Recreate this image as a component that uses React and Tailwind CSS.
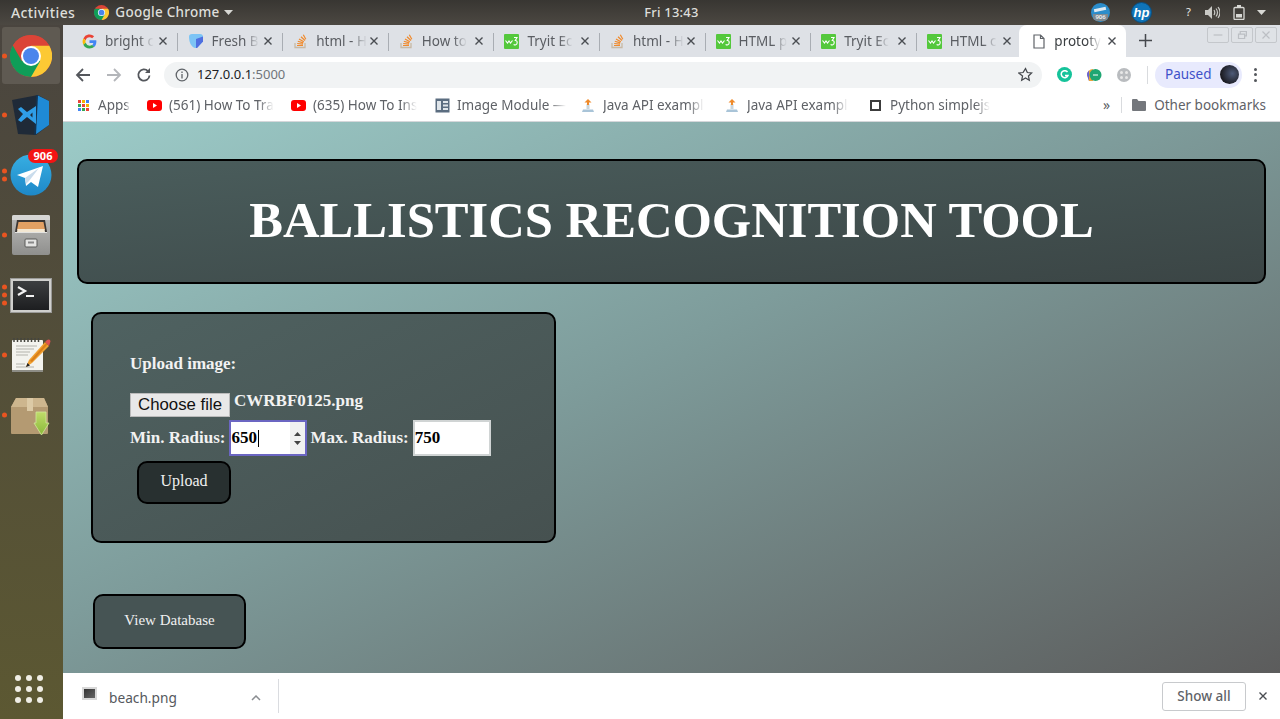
import React from "react";

const ui = { fontFamily: '"Noto Sans", "Open Sans", sans-serif' };
const serif = { fontFamily: '"Liberation Serif", serif' };

function GIcon() {
  return (
    <svg width="15" height="15" viewBox="0 0 24 24" className="shrink-0">
      <path fill="#EA4335" d="M12 5c1.6 0 3.1.6 4.2 1.6l3.2-3.2A11 11 0 0 0 2.2 7l3.7 2.9A6.6 6.6 0 0 1 12 5z" />
      <path fill="#4285F4" d="M23 12.3c0-.8-.1-1.6-.2-2.3H12v4.5h6.2a5.3 5.3 0 0 1-2.3 3.5l3.6 2.8c2.2-2 3.5-5 3.5-8.5z" />
      <path fill="#FBBC05" d="M5.9 14.1a6.6 6.6 0 0 1 0-4.2L2.2 7a11 11 0 0 0 0 10z" />
      <path fill="#34A853" d="M12 23c3 0 5.500-1 7.500-2.700L15.900 17.500c-1 .7-2.300 1.100-3.900 1.100a6.600 6.600 0 0 1-6.100-4.500L2.200 17A11 11 0 0 0 12 23z" />
    </svg>
  );
}
function FreshIcon() {
  return (
    <svg width="16" height="16" viewBox="0 0 16 16" className="shrink-0">
      <path d="M1 3.500Q1 1 4 1h8q3 0 3 3v4.500L9 15H7C3 14 1 9 1 3.500z" fill="#7cc4f5" />
      <path d="M8 6l7-2.500v5L9 15H8z" fill="#4f6fe0" />
    </svg>
  );
}
function SOIcon() {
  return (
    <svg width="15" height="16" viewBox="0 0 15 16" className="shrink-0" fill="none">
      <path d="M2 10v4.500h10V10" stroke="#c8b9a4" strokeWidth="1.300" />
      <path d="M4 12.500h6M4.200 10.500l5.800.7M4.800 8.200l5.500 1.700M6 6l4.800 2.800M8 3.800l4 3.700M10.300 1.800l2.500 4.500" stroke="#f08a2c" strokeWidth="1.200" />
    </svg>
  );
}
function W3Icon() {
  return (
    <svg width="15" height="15" viewBox="0 0 15 15" className="shrink-0">
      <rect width="15" height="15" rx="1" fill="#54c83c" />
      <path d="M1.500 6.500 3.500 9 5 7l1.500 2 2-2.500" stroke="#fff" strokeWidth="1.100" fill="none" />
      <path d="M10 3.500h3L11.300 6.500c1.500 0 1.900 1 1.900 2 0 2.500-2.500 3-3.500 1.800" stroke="#fff" strokeWidth="1.100" fill="none" />
    </svg>
  );
}
function DocIcon() {
  return (
    <svg width="12" height="15" viewBox="0 0 12 15" className="shrink-0" fill="none">
      <path d="M1 1h6.500L11 4.500V14H1z M7.500 1v3.500H11" stroke="#5f6368" strokeWidth="1.200" />
    </svg>
  );
}
function X({ className = "" }) {
  return (
    <svg width="10" height="10" viewBox="0 0 10 10" className={"shrink-0 " + className}>
      <path d="M1.500 1.500l7 7m0-7l-7 7" stroke="#4a4d52" strokeWidth="1.400" />
    </svg>
  );
}

const fadeEnd = { WebkitMaskImage: "linear-gradient(to right,#000 70%,transparent)" };
const fadeBm = { WebkitMaskImage: "linear-gradient(to right,#000 85%,transparent)" };

function Tab({ icon, title, sep = true, active = false }) {
  return (
    <div className={active ? "relative ml-[-2px] flex h-[32px] w-[107px] items-center rounded-t-lg bg-white pl-[14px] pr-[9px]" : "relative flex h-[32px] w-[105.600px] items-center pl-[11px] pr-[9px]"}>
      {icon}
      <span className={active ? "ml-[9px] whitespace-nowrap text-[13.500px] text-[#3c4043]" : "ml-[8px] whitespace-nowrap text-[13.500px] text-[#5a5d62]"} style={fadeEnd}>{title}</span>
      <X className="ml-auto" />
      {sep && <span className="absolute right-[-1px] top-[8px] h-[18px] w-px bg-[#a9adb3]" />}
    </div>
  );
}

function Bookmark({ icon, label, width }) {
  return (
    <div className="flex items-center" style={{ width }}>
      <span className="flex w-[16px] shrink-0 justify-center">{icon}</span>
      <span className="ml-[7px] whitespace-nowrap text-[13.500px] text-[#5f6267]" style={fadeBm}>{label}</span>
    </div>
  );
}

function YT() {
  return (
    <svg width="15" height="11" viewBox="0 0 15 11"><rect width="15" height="11" rx="3" fill="#f00" /><path d="M6 3l4 2.500L6 8z" fill="#fff" /></svg>
  );
}
function JavaIcon() {
  return (
    <svg width="14" height="16" viewBox="0 0 14 16">
      <path d="M2 12.500h10l1 2.500H1z" fill="#a9c4d8" />
      <path d="M5.500 12V7h3v5z" fill="#c9d5dc" />
      <path d="M7 2l3.500 3.500h-7z" fill="#ef8a2a" />
      <path d="M6 5h2v3H6z" fill="#ef8a2a" />
    </svg>
  );
}

function DockChrome() {
  return (
    <svg width="42" height="42" viewBox="0 0 42 42">
      <circle cx="21" cy="21" r="21" fill="#db4437" />
      <path d="M21 42a21 21 0 0 0 18.200-31.500H21z" fill="#fcc934" />
      <path d="M2.800 10.500A21 21 0 0 0 21 42l9.100-15.750L21 10.500z" fill="#0f9d58" />
      <path d="M21 0a21 21 0 0 0-18.200 10.500l9.100 15.750L21 10.500h18.200A21 21 0 0 0 21 0z" fill="#db4437" />
      <circle cx="21" cy="21" r="10" fill="#fff" />
      <circle cx="21" cy="21" r="8" fill="#4a85ec" />
    </svg>
  );
}

function Pip({ n = 1 }) {
  return (
    <div className="absolute left-0 top-1/2 flex -translate-y-1/2 flex-col gap-[3px]">
      {Array.from({ length: n }).map((_, i) => (
        <span key={i} className="h-[5px] w-[5px] rounded-full bg-[#e95420]" />
      ))}
    </div>
  );
}

function DockItem({ n, active, children }) {
  return (
    <div className={active ? "relative mb-[1px] flex h-[57px] w-[58px] items-center justify-center rounded-[3px] bg-[#5f5a52]" : "relative flex h-[60px] w-[58px] items-center justify-center"}>
      {n > 0 && <Pip n={n} />}
      {children}
    </div>
  );
}

function Dock() {
  return (
    <aside className="flex w-[63px] shrink-0 flex-col items-start bg-[linear-gradient(to_bottom,#4a453f,#5c5832)] pl-[2px] pt-[2px]">
      <DockItem n={1} active><DockChrome /></DockItem>
      <DockItem n={1}>
        <svg width="40" height="42" viewBox="0 0 40 42">
          <path d="M1 6 27 1 38 7v24L25 41 7 40z" fill="#1f2a38" />
          <path d="M26 1 38 7v24L24 41z" fill="#1f8ad6" />
          <path d="M25 1 27 1 25 41 23 41z" fill="#16324d" />
          <path d="M7 15l3-2 6 5 9-6v18l-9-7-6 5-3-2 5-6zM19 21l2.500 2.500v-5z" fill="#2f9ee8" fillRule="evenodd" />
        </svg>
      </DockItem>
      <DockItem n={2}>
        <svg width="42" height="42" viewBox="0 0 42 42">
          <defs>
            <linearGradient id="tg" x1="0" y1="0" x2="0" y2="1"><stop offset="0" stopColor="#37aee2" /><stop offset="1" stopColor="#1e88c8" /></linearGradient>
          </defs>
          <circle cx="21" cy="21" r="20.500" fill="url(#tg)" />
          <path d="M7 21l26-9-5 21-7-5-5 4-1-8z" fill="#fff" />
          <path d="M15 24l14-10-10 13-3 3z" fill="#c9dcec" />
        </svg>
        <span className="absolute right-[2px] top-[4px] h-[14px] w-[30px] rounded-full bg-[#f41414] text-center text-[11px] font-bold leading-[14px] text-white" style={ui}>906</span>
      </DockItem>
      <DockItem n={1}>
        <svg width="40" height="42" viewBox="0 0 40 42">
          <defs>
            <linearGradient id="cab" x1="0" y1="0" x2="0" y2="1"><stop offset="0" stopColor="#bdbdbb" /><stop offset="1" stopColor="#8f8f8d" /></linearGradient>
          </defs>
          <rect x="1" y="1" width="38" height="40" rx="2" fill="url(#cab)" />
          <path d="M1 3q0-2 2-2h34q2 0 2 2v3H1z" fill="#d6d6d4" />
          <path d="M4 18 6 6h28l2 12z" fill="#3b3633" />
          <path d="M6 16 7.500 8h25L34 16z" fill="#e2a063" />
          <path d="M6 18l.500-3h27l.5 3z" fill="#f3e7d2" />
          <rect x="4" y="18" width="32" height="1" fill="#e2e2e0" />
          <rect x="14" y="25" width="12" height="8" rx="1" fill="#e4e4e2" stroke="#5a5a58" strokeWidth="1" />
          <rect x="17" y="27.500" width="6" height="2" fill="#888" />
        </svg>
      </DockItem>
      <DockItem n={3}>
        <svg width="42" height="35" viewBox="0 0 42 35">
          <defs>
            <linearGradient id="term" x1="0" y1="0" x2="0" y2="1"><stop offset="0" stopColor="#3c3e40" /><stop offset="1" stopColor="#1d1e20" /></linearGradient>
          </defs>
          <rect x=".5" y=".5" width="41" height="34" fill="#cfcfcd" stroke="#9a9a98" />
          <rect x="3" y="3" width="36" height="29" fill="url(#term)" />
          <path d="M8 9l7 4-7 4" stroke="#f2f2f2" strokeWidth="2.200" fill="none" />
          <rect x="16" y="17" width="8" height="2" fill="#f2f2f2" />
        </svg>
      </DockItem>
      <DockItem n={1}>
        <svg width="42" height="36" viewBox="0 0 42 36" className="mb-[1px]">
          <rect x="2" y="3" width="31" height="31" rx="1" fill="#f3f3ee" />
          <rect x="2" y="33" width="31" height="2" fill="#8d8d86" />
          <path d="M4 5V1M7.500 5V1M11 5V1M14.500 5V1M18 5V1M21.500 5V1M25 5V1M28.500 5V1" stroke="#45453f" strokeWidth="1.500" />
          <path d="M6 9h21M6 12h18M6 15h14M6 18h12M6 27h9M6 30h18" stroke="#b4b4ac" strokeWidth="1.200" />
          <path d="M16 30l3-7L35 5l4 4-17 17z" fill="#f0a030" />
          <path d="M20 24 36 6l1.500 1.500L22 25z" fill="#d97f1a" />
          <path d="M35 5l2-2q2-1 3 0t0 3l-1 3z" fill="#dc5050" />
          <path d="M16 30l1.500-4 2.500 2.500z" fill="#222" />
        </svg>
      </DockItem>
      <DockItem n={1}>
        <svg width="42" height="40" viewBox="0 0 42 40" className="mt-[3px]">
          <defs>
            <linearGradient id="gr" x1="0" y1="0" x2="0" y2="1"><stop offset="0" stopColor="#c0dc6a" /><stop offset="1" stopColor="#8ab83a" /></linearGradient>
          </defs>
          <path d="M1 10 6 1h28l4 9v26q0 1-1 1H2q-1 0-1-1z" fill="#b49a72" />
          <path d="M1 10 6 1h28l4 9z" fill="#cdb68e" />
          <rect x="17" y="1" width="6" height="13" fill="#dccaa6" />
          <path d="M29 15h10v11h3L34.500 38 27 26h2z" transform="translate(-3 0)" fill="url(#gr)" stroke="#d1e79a" strokeWidth=".8" />
        </svg>
      </DockItem>
      <div className="mb-[16px] ml-[13px] mt-auto grid grid-cols-3 gap-[5px]">
        {Array.from({ length: 9 }).map((_, i) => (
          <span key={i} className="h-[6px] w-[6px] rounded-full bg-[#f0eee6]" />
        ))}
      </div>
    </aside>
  );
}

function TopBar() {
  return (
    <header className="flex h-[25px] shrink-0 items-center bg-[linear-gradient(to_bottom,#383632,#4c4842)] text-[13px] font-medium text-[#dededa]" style={ui}>
      <span className="ml-[11px] text-[14px] tracking-[.4px]">Activities</span>
      <svg width="15" height="15" viewBox="0 0 42 42" className="ml-[19px]">
        <circle cx="21" cy="21" r="21" fill="#db4437" />
        <path d="M21 42a21 21 0 0 0 18.200-31.500H21z" fill="#fcc934" />
        <path d="M2.800 10.500A21 21 0 0 0 21 42l9.100-15.750L21 10.500z" fill="#0f9d58" />
        <circle cx="21" cy="21" r="10" fill="#fff" />
        <circle cx="21" cy="21" r="8" fill="#4a85ec" />
      </svg>
      <span className="ml-[6px] text-[13.500px] tracking-[.25px]">Google Chrome</span>
      <svg width="9" height="5" viewBox="0 0 9 5" className="ml-[5px]"><path d="M0 0h9L4.500 5z" fill="#d8d8d4" /></svg>
      <span className="ml-[408px] w-[60px] text-center tracking-[.2px]">Fri 13:43</span>
      <div className="ml-auto flex items-center">
        <span className="relative h-[19px] w-[19px] overflow-hidden rounded-full bg-[#2b8dcb]">
          <span className="absolute left-[3px] top-[5px] h-[3px] w-[12px] -rotate-12 bg-[#dfeaf2]" />
          <span className="absolute bottom-[1px] left-[2px] w-[15px] bg-[#7d8a92] text-center text-[6px] leading-[7px] text-white">906</span>
        </span>
        <svg width="21" height="21" viewBox="0 0 21 21" className="ml-[21px]">
          <circle cx="10.500" cy="10.500" r="10" fill="#0f74b8" stroke="#0a4f80" strokeWidth="1" />
          <text x="10.500" y="15" textAnchor="middle" fontSize="13" fontStyle="italic" fontWeight="700" fill="#fff" fontFamily="Liberation Sans">hp</text>
        </svg>
        <span className="ml-[34px] text-[11px]">?</span>
        <svg width="15" height="13" viewBox="0 0 15 13" className="ml-[14px]" fill="none">
          <path d="M0 4h3l4-4v13L3 9H0z" fill="#c9c9c5" />
          <path d="M9 4q1.500 2.500 0 5M11 2.500q3 4 0 8M13 1q4 5.500 0 11" stroke="#c9c9c5" strokeWidth="1.200" />
        </svg>
        <svg width="12" height="15" viewBox="0 0 12 15" className="ml-[13px]" fill="none">
          <rect x="1" y="2.500" width="10" height="12" rx="1" stroke="#d8d8d4" strokeWidth="1.300" />
          <rect x="4" y="0" width="4" height="2" fill="#d8d8d4" />
          <rect x="3" y="9" width="6" height="3.500" fill="#d8d8d4" />
        </svg>
        <svg width="9" height="5" viewBox="0 0 9 5" className="ml-[12px] mr-[14px]"><path d="M0 0h9L4.500 5z" fill="#d8d8d4" /></svg>
      </div>
    </header>
  );
}

function Browser() {
  return (
    <div className="flex min-w-0 flex-1 flex-col" style={ui}>
      <div className="flex h-[32px] shrink-0 items-end bg-[#dee1e6] pl-[1px]">
        <div className="w-[7px] shrink-0" />
        <Tab icon={<GIcon />} title="bright c" />
        <Tab icon={<FreshIcon />} title="Fresh B" />
        <Tab icon={<SOIcon />} title="html - H" />
        <Tab icon={<SOIcon />} title="How to" />
        <Tab icon={<W3Icon />} title="Tryit Ec" />
        <Tab icon={<SOIcon />} title="html - H" />
        <Tab icon={<W3Icon />} title="HTML p" />
        <Tab icon={<W3Icon />} title="Tryit Ec" />
        <Tab icon={<W3Icon />} title="HTML c" sep={false} />
        <Tab icon={<DocIcon />} title="prototy" sep={false} active />
        <svg width="13" height="13" viewBox="0 0 13 13" className="mb-[10px] ml-[13px]"><path d="M6.500 0v13M0 6.500h13" stroke="#45484d" strokeWidth="1.500" /></svg>
        <div className="mb-[14px] ml-auto mr-[3px] flex gap-[2px]">
          {["M6 8h10", "M7 7h7v5H7zM9 7V4h7v5h-2", "M7 4l8 8m0-8l-8 8"].map((d) => (
            <span key={d} className="flex h-[16px] w-[22px] items-center justify-center rounded-[2px] border border-[#c4c7cb] bg-[#dfe2e6]">
              <svg width="20" height="14" viewBox="0 0 22 16" fill="none"><path d={d} stroke="#bcbfc4" strokeWidth="1.400" /></svg>
            </span>
          ))}
        </div>
      </div>

      <div className="flex h-[34px] shrink-0 items-center bg-white pt-[1px]">
        <svg width="16" height="16" viewBox="0 0 16 16" className="ml-[12px]" fill="none"><path d="M15 8H2M8 2 2 8l6 6" stroke="#54575c" strokeWidth="1.800" /></svg>
        <svg width="16" height="16" viewBox="0 0 16 16" className="ml-[15px]" fill="none"><path d="M1 8h13M8 2l6 6-6 6" stroke="#b4b6ba" strokeWidth="1.800" /></svg>
        <svg width="16" height="16" viewBox="0 0 16 16" className="ml-[14px]" fill="none"><path d="M13.500 8.500a5.600 5.600 0 1 1-1.500-4.300" stroke="#54575c" strokeWidth="1.800" /><path d="M14 1v5H9z" fill="#54575c" /></svg>
        <div className="ml-[12px] flex h-[26px] w-[878px] items-center rounded-full bg-[#f1f3f4]">
          <svg width="14" height="14" viewBox="0 0 14 14" className="ml-[11px]" fill="none"><circle cx="7" cy="7" r="5.800" stroke="#5f6368" strokeWidth="1.300" /><path d="M7 6v4.500M7 3.500v1.500" stroke="#5f6368" strokeWidth="1.300" /></svg>
          <span className="ml-[8px] text-[13px] text-[#202124]">127.0.0.1<span className="text-[#70757a]">:5000</span></span>
          <svg width="15" height="15" viewBox="0 0 24 24" className="ml-auto mr-[9px]" fill="none"><path d="M12 2.500l2.900 6.300 6.900.8-5.100 4.700 1.400 6.800-6.100-3.400-6.100 3.400 1.400-6.800L1.200 9.600l6.900-.8z" stroke="#45484d" strokeWidth="2" /></svg>
        </div>
        <span className="ml-[15px] flex h-[15px] w-[15px] items-center justify-center rounded-full bg-[#15c39a]">
          <svg width="9" height="9" viewBox="0 0 9 9" fill="none"><path d="M7.500 2A3.500 3.500 0 1 0 8 5.500H5" stroke="#fff" strokeWidth="1.500" /></svg>
        </span>
        <svg width="16" height="16" viewBox="0 0 16 16" className="ml-[14px]">
          <path d="M1 8a6 6 0 0 1 6-6v12H3z" fill="#e8a33d" />
          <path d="M1 8a6 6 0 0 1 2-4.500V14z" fill="#6a62d8" />
          <circle cx="9.500" cy="8" r="6" fill="#1ea672" />
          <path d="M7 8h5" stroke="#fff" strokeWidth="1" />
        </svg>
        <span className="ml-[15px] grid h-[14px] w-[14px] grid-cols-2 place-items-center rounded-full bg-[#b9bcbf] p-[2px]">
          <span className="h-[3px] w-[3px] rounded-full bg-[#e8e8e8]" />
          <span className="h-[3px] w-[3px] rounded-full bg-[#e8e8e8]" />
          <span className="h-[3px] w-[3px] rounded-full bg-[#e8e8e8]" />
          <span className="h-[3px] w-[3px] rounded-full bg-[#e8e8e8]" />
        </span>
        <span className="ml-[16px] h-[18px] w-px bg-[#d9dbde]" />
        <div className="ml-[7px] flex h-[26px] w-[87px] items-center rounded-full bg-[#e8eafd]">
          <span className="ml-[10px] text-[13.500px] text-[#3f51c9]">Paused</span>
          <span className="ml-auto mr-[3px] h-[19px] w-[19px] rounded-full bg-[radial-gradient(circle_at_65%_45%,#4d5a78,#1c1c22_70%)]" />
        </div>
        <div className="ml-[12px] flex flex-col gap-[2.500px]">
          <span className="h-[3px] w-[3px] rounded-full bg-[#54575c]" />
          <span className="h-[3px] w-[3px] rounded-full bg-[#54575c]" />
          <span className="h-[3px] w-[3px] rounded-full bg-[#54575c]" />
        </div>
      </div>

      <div className="flex h-[31px] shrink-0 items-center border-b border-[#d5d7da] bg-white pb-[2px] pl-[12px]">
        <Bookmark width={71} label="Apps" icon={
          <span className="grid grid-cols-3 gap-[1px]">
            {["#e8453c", "#f4b400", "#4285f4", "#34a853", "#e8453c", "#f4b400", "#4285f4", "#34a853", "#e8453c"].map((c, i) => (
              <span key={i} className="h-[3px] w-[3px]" style={{ background: c }} />
            ))}
          </span>
        } />
        <Bookmark width={144} label="(561) How To Tra" icon={<YT />} />
        <Bookmark width={144} label="(635) How To Ins" icon={<YT />} />
        <Bookmark width={146} label="Image Module —" icon={
          <svg width="15" height="15" viewBox="0 0 15 15"><rect x=".5" y=".5" width="14" height="14" fill="#5b6d80" /><path d="M2 3h4v9H2zM8 3h5v2H8zM8 6.500h5v2H8zM8 10h5v2H8z" fill="#dfe5ea" /></svg>
        } />
        <Bookmark width={144} label="Java API exampl" icon={<JavaIcon />} />
        <Bookmark width={143} label="Java API exampl" icon={<JavaIcon />} />
        <Bookmark width={132} label="Python simplejs" icon={
          <span className="h-[11px] w-[11px] border-2 border-[#3c3c3c] bg-white" />
        } />
        <span className="ml-[104px] text-[14px] leading-none text-[#5b5e63]">»</span>
        <span className="ml-[11px] h-[16px] w-px bg-[#d9dbde]" />
        <svg width="14" height="12" viewBox="0 0 14 12" className="ml-[10px]"><path d="M0 1q0-1 1-1h4l1.500 2H13q1 0 1 1v8q0 1-1 1H1q-1 0-1-1z" fill="#74777c" /></svg>
        <span className="ml-[8px] whitespace-nowrap text-[13.500px] text-[#5f6267]">Other bookmarks</span>
      </div>

      <main className="flex min-h-0 flex-1 flex-col overflow-hidden bg-[linear-gradient(to_bottom_right,#9ccbc8_0%,#7e9c9b_45%,#5c5c5c_100%)] pl-[14px] pt-[37px]" style={serif}>
        <div className="flex h-[125px] w-[1189px] shrink-0 items-center justify-center rounded-[10px] border-2 border-black bg-[linear-gradient(to_bottom_right,#4a5d5c,#3b4545)]">
          <h1 className="mb-[2px] text-[50.600px] font-bold leading-none text-white">BALLISTICS RECOGNITION TOOL</h1>
        </div>

        <section className="ml-[14px] mt-[28px] flex h-[231px] w-[465px] shrink-0 flex-col rounded-[10px] border-2 border-black bg-[linear-gradient(to_bottom_right,#4f6261,#465150)] pl-[37px] pt-[40px] text-[17px] font-bold leading-[20px] text-[#f2f2f2]">
          <div>Upload image:</div>
          <div className="mt-[19px] flex items-start">
            <span className="flex h-[24px] w-[100px] shrink-0 items-center justify-center border border-[#bbb] bg-[#e8e8e8] text-[16.800px] font-normal text-[#111]" style={{ fontFamily: '"Liberation Sans", sans-serif' }}>Choose file</span>
            <span className="ml-[4px] mt-[-2px]">CWRBF0125.png</span>
          </div>
          <div className="mt-[3px] flex items-center">
            <span>Min. Radius:</span>
            <span className="relative ml-[4px] flex h-[36px] w-[78px] items-center border-2 border-[#6b66c2] bg-white text-black">
              650<span className="ml-[1px] h-[17px] w-px bg-black" />
              <span className="absolute right-0 top-0 flex h-full w-[15px] flex-col items-center justify-center gap-[5px] bg-[#f1f1f1]">
                <svg width="7" height="4" viewBox="0 0 7 4"><path d="M0 4l3.500-4L7 4z" fill="#444" /></svg>
                <svg width="7" height="4" viewBox="0 0 7 4"><path d="M0 0l3.500 4L7 0z" fill="#444" /></svg>
              </span>
            </span>
            <span className="ml-[3px]">Max. Radius:</span>
            <span className="ml-[4px] flex h-[36px] w-[78px] items-center border-2 border-[#d0d4d4] bg-white text-black">750</span>
          </div>
          <div className="ml-[7px] mt-[5px] flex h-[43px] w-[94px] items-center justify-center rounded-[10px] border-2 border-black bg-[#283030] pb-[3px] text-[16px] font-normal text-[#f0f0f0]">Upload</div>
        </section>

        <div className="ml-[16px] mt-[51px] flex h-[55px] w-[153px] shrink-0 items-center justify-center rounded-[10px] border-2 border-black bg-[#465454] pb-[3px] text-[15px] text-[#f0f0f0]">View Database</div>
      </main>

      <footer className="flex h-[46px] shrink-0 items-center bg-white">
        <span className="mb-[6px] ml-[19px] h-[13px] w-[15px] border-2 border-[#d8d8d8] bg-[linear-gradient(to_bottom_right,#333,#666)]" />
        <span className="ml-[12px] mt-[4px] text-[13.700px] text-[#55585d]">beach.png</span>
        <svg width="10" height="6" viewBox="0 0 10 6" className="ml-[74px] mt-[4px]" fill="none"><path d="M1 5l4-4 4 4" stroke="#8a8d91" strokeWidth="1.500" /></svg>
        <span className="ml-[17px] h-[34px] w-px bg-[#dadce0]" />
        <span className="ml-auto flex h-[29px] w-[84px] items-center justify-center rounded-[3px] border border-[#c8cacd] text-[13.500px] font-medium text-[#5f6368]">Show all</span>
        <X className="ml-[12px] mr-[12px]" />
      </footer>
    </div>
  );
}

export default function App() {
  return (
    <div className="flex h-[719px] w-[1280px] flex-col overflow-hidden">
      <TopBar />
      <div className="flex min-h-0 flex-1">
        <Dock />
        <Browser />
      </div>
    </div>
  );
}
